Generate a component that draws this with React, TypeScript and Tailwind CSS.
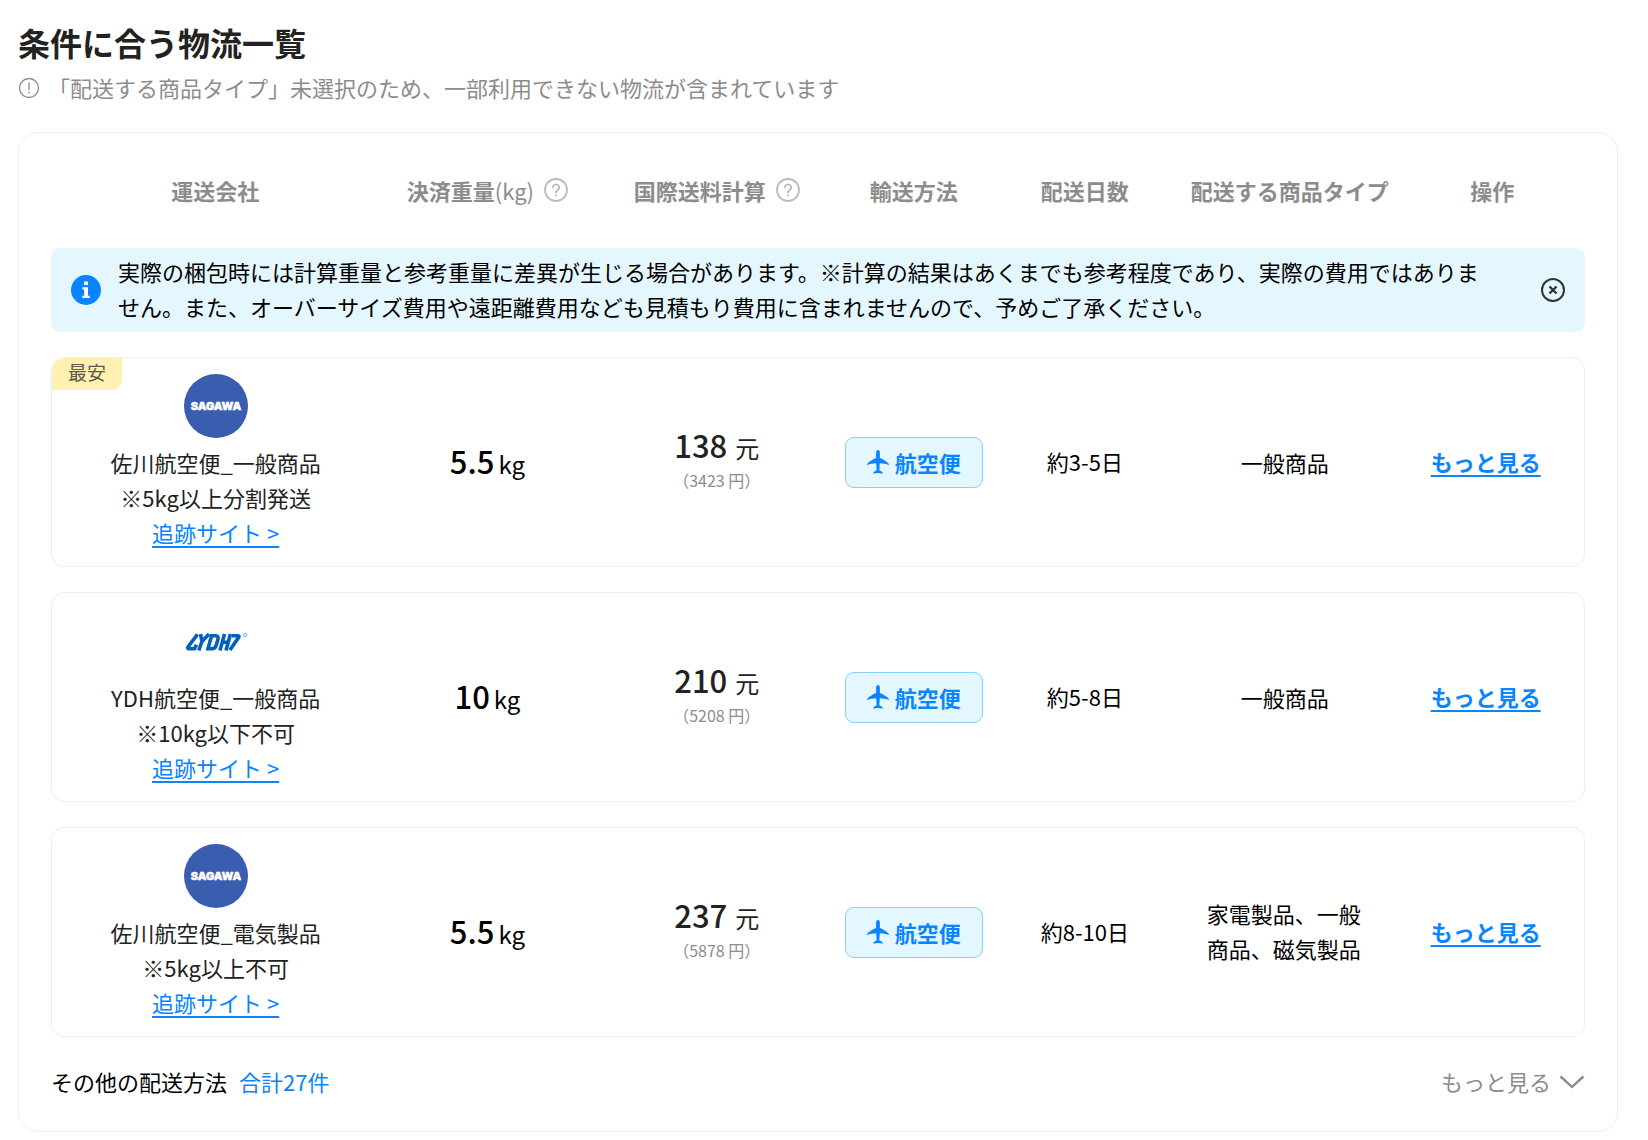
import React from "react";

const LINK = "text-[#0a84ff] underline underline-offset-4 decoration-2";

function HelpIcon() {
  return (
    <svg viewBox="0 0 24 24" className="size-6 shrink-0" fill="none" stroke="#bababa" strokeWidth="1.8" strokeLinecap="round" aria-hidden="true">
      <circle cx="12" cy="12" r="11" />
      <path d="M8.900 9.300a3.100 3.100 0 1 1 4.900 2.700c-1.200.8-1.800 1.300-1.800 2.700" />
      <circle cx="12" cy="17.600" r="1.100" fill="#bababa" stroke="none" />
    </svg>
  );
}

function PlaneIcon() {
  return (
    <svg viewBox="0 0 22 24" className="h-6 w-[22px] shrink-0" fill="#0a84ff" aria-hidden="true">
      <path d="M11 0c1.200 0 1.900 1.300 1.900 2.900v5.200c3.300 1.300 6.400 3.300 8.600 5.300.4.400.5.800.5 1.600-3-1.100-6-1.700-9.200-1.800l-.5 7.100c1.400.6 2.500 1.300 3.300 2.200v1.300c-1.400-.5-2.800-.7-4.600-.7s-3.200.2-4.600.7v-1.300c.8-.9 1.900-1.600 3.300-2.200l-.5-7.100C6 13.300 3 13.900 0 15c0-.8.100-1.200.5-1.600 2.200-2 5.300-4 8.600-5.300V2.900C9.100 1.300 9.800 0 11 0z" />
    </svg>
  );
}

function SagawaLogo() {
  return (
    <svg viewBox="0 0 64 64" className="size-16" role="img" aria-label="SAGAWA">
      <circle cx="32" cy="32" r="32" fill="#3b5db0" />
      <text x="32" y="36" textAnchor="middle" fontFamily="Inter, sans-serif" fontWeight="900" fontSize="11" fill="#fff" stroke="#fff" strokeWidth="0.4">
        SAGAWA
      </text>
    </svg>
  );
}

function YdhLogo() {
  return (
    <svg viewBox="0 0 64 64" className="size-16" role="img" aria-label="YDH">
      <g fill="none" stroke="#0560bd" strokeWidth="3.600" strokeLinejoin="miter">
        <path d="M13.500 25.400 4.200 37.600c-.9 1.300-.5 2.100 1 2.100H10.500l2-4" />
        <path d="M16.500 25l1.600 7.500M25 25l-7 7.500-3.200 9" />
        <path d="M27.500 26.800h4c2.600 0 3 1.400 2.400 3.600l-1.500 5.400c-.7 2.600-1.900 3.900-4.400 3.900h-4z" />
        <path d="M40.500 25l-4.500 16.500M46.500 25 42 41.500M38 33.200h6" />
        <path d="M48 26.800h6c1.200 0 1.300.6.600 1.600L46 41" />
      </g>
      <circle cx="61" cy="26" r="1.600" fill="none" stroke="#6f9fd4" strokeWidth="0.9" />
    </svg>
  );
}

type Row = {
  cheapest?: boolean;
  logo: "sagawa" | "ydh";
  name: string;
  note: string;
  weight: string;
  fee: string;
  yen: string;
  days: string;
  goods: string;
};

const rows: Row[] = [
  { cheapest: true, logo: "sagawa", name: "佐川航空便_一般商品", note: "※5kg以上分割発送", weight: "5.5", fee: "138", yen: "3423", days: "約3-5日", goods: "一般商品" },
  { logo: "ydh", name: "YDH航空便_一般商品", note: "※10kg以下不可", weight: "10", fee: "210", yen: "5208", days: "約5-8日", goods: "一般商品" },
  { logo: "sagawa", name: "佐川航空便_電気製品", note: "※5kg以上不可", weight: "5.5", fee: "237", yen: "5878", days: "約8-10日", goods: "家電製品、一般商品、磁気製品" },
];

const CELL = "border-y border-[#efefef]";

function ShippingRow({ row }: { row: Row }) {
  return (
    <tr>
      <td className="relative rounded-l-[14px] border-y border-l border-[#efefef] px-0 py-4 text-[#222]">
        {row.cheapest && (
          <span className="absolute top-0 left-0 h-8 rounded-tl-[13px] rounded-br-[10px] bg-[#fff0b3] px-4 text-[19px] leading-7 text-[#5e5946]">
            最安
          </span>
        )}
        <div className="flex flex-col items-center">
          {row.logo === "sagawa" ? <SagawaLogo /> : <YdhLogo />}
          <span className="mt-[7px]">{row.name}</span>
          <span>{row.note}</span>
          <a href="#tracking" className={LINK}>追跡サイト &gt;</a>
        </div>
      </td>
      <td className={`${CELL} p-0`}>
        <span className="text-[31px] font-medium">{row.weight}</span>
        <span className="ml-1 text-2xl">kg</span>
      </td>
      <td className={`${CELL} p-0`}>
        <div className="leading-[34px] text-[#222]">
          <span className="text-[31px] font-medium">{row.fee}</span>
          <span className="ml-2 text-2xl leading-[34px]">元</span>
        </div>
        <div className="text-base leading-[31px] text-[#8c8c8c]">（{row.yen} 円）</div>
      </td>
      <td className={`${CELL} p-0`}>
        <span className="inline-flex h-[51px] w-[138px] items-center justify-center gap-1.5 rounded-[9px] border border-[#86cffb] bg-[#e4f7ff] align-middle font-bold text-[#0a84ff]">
          <PlaneIcon />
          航空便
        </span>
      </td>
      <td className={`${CELL} px-0 pt-0 pb-0.5 whitespace-nowrap`}>{row.days}</td>
      <td className={`${CELL} pt-0 pr-2.5 pb-0.5 pl-0`}>
        <span className="inline-block max-w-[156px] text-left align-middle">{row.goods}</span>
      </td>
      <td className="rounded-r-[14px] border-y border-r border-[#efefef] pt-0 pr-3 pb-0.5 pl-0">
        <a href="#detail" className={`${LINK} font-bold`}>もっと見る</a>
      </td>
    </tr>
  );
}

export default function App() {
  return (
    <main lang="ja" className="min-h-screen bg-white pt-[22px] pr-[30px] pb-2 pl-[18px] font-['Noto_Sans_CJK_JP',sans-serif] text-[22px] leading-[35px] text-black">
      <h1 className="text-[32px] leading-10 font-bold text-[#222]">条件に合う物流一覧</h1>
      <p className="mt-2 flex items-center text-[#8c8c8c]">
        <svg viewBox="0 0 22 22" className="mr-2 size-[22px] shrink-0" fill="none" stroke="#8c8c8c" strokeWidth="1.300" aria-hidden="true">
          <circle cx="11" cy="11" r="9.500" />
          <path d="M11 5.500v7.500M11 14.600v1.700" />
        </svg>
        「配送する商品タイプ」未選択のため、一部利用できない物流が含まれています
      </p>

      <section className="mt-[27px] rounded-[20px] border border-[#efefef] px-8 pt-[3px] pb-8">
        <table className="w-full table-fixed border-separate border-spacing-x-0 border-spacing-y-[25px] text-center">
          <thead>
            <tr className="h-[62px] text-[#8c8c8c]">
              <th className="w-[21.4%] px-0 pt-0 pb-1">運送会社</th>
              <th className="w-[14.1%] px-0 pt-0 pb-1">
                <span className="flex items-center justify-center gap-2.5">
                  <span>決済重量<span className="font-normal">(kg)</span></span>
                  <HelpIcon />
                </span>
              </th>
              <th className="w-[15.8%] px-0 pt-0 pb-1">
                <span className="flex items-center justify-center gap-2.5">
                  国際送料計算
                  <HelpIcon />
                </span>
              </th>
              <th className="w-[9.9%] px-0 pt-0 pb-1">輸送方法</th>
              <th className="w-[12.4%] px-0 pt-0 pb-1">配送日数</th>
              <th className="w-[14.3%] px-0 pt-0 pb-1">配送する商品タイプ</th>
              <th className="w-[12.1%] px-0 pt-0 pb-1">操作</th>
            </tr>
          </thead>
          <tbody>
            <tr>
              <td colSpan={7} className="rounded-[9px] bg-[#e4f7ff] p-0 text-left">
                <div className="flex h-[84px] items-center px-5">
                  <svg viewBox="0 0 30 30" className="mr-[17px] size-[30px] shrink-0" aria-hidden="true">
                    <circle cx="15" cy="15" r="15" fill="#0a84ff" />
                    <path d="M13 6.500h4v3.600h-4zM11.500 12.200h5.500v8.600h1.700v2.200h-7.400v-2.200h1.900v-6.400h-1.700z" fill="#fff" />
                  </svg>
                  <p className="mr-12 flex-1 pb-0.5">
                    実際の梱包時には計算重量と参考重量に差異が生じる場合があります。※計算の結果はあくまでも参考程度であり、実際の費用ではありません。また、オーバーサイズ費用や遠距離費用なども見積もり費用に含まれませんので、予めご了承ください。
                  </p>
                  <button type="button" aria-label="閉じる" className="shrink-0">
                    <svg viewBox="0 0 24 24" className="size-6" fill="none" stroke="#333" strokeWidth="2" aria-hidden="true">
                      <circle cx="12" cy="12" r="11" />
                      <path d="M8.500 8.500l7 7M15.500 8.500l-7 7" strokeWidth="2.400" />
                    </svg>
                  </button>
                </div>
              </td>
            </tr>
            {rows.map((row) => (
              <ShippingRow key={row.name} row={row} />
            ))}
          </tbody>
        </table>
        <div className="flex items-center justify-between pt-0.5">
          <p>
            その他の配送方法<a href="#others" className="ml-3 text-[#0a84ff]">合計27件</a>
          </p>
          <button type="button" className="flex items-center gap-2 text-[#8c8c8c]">
            もっと見る
            <svg viewBox="0 0 26 14" className="h-3.5 w-[26px]" fill="none" stroke="#8c8c8c" strokeWidth="2.400" aria-hidden="true">
              <path d="M1.500 1.500 13 12 24.500 1.500" />
            </svg>
          </button>
        </div>
      </section>
    </main>
  );
}
